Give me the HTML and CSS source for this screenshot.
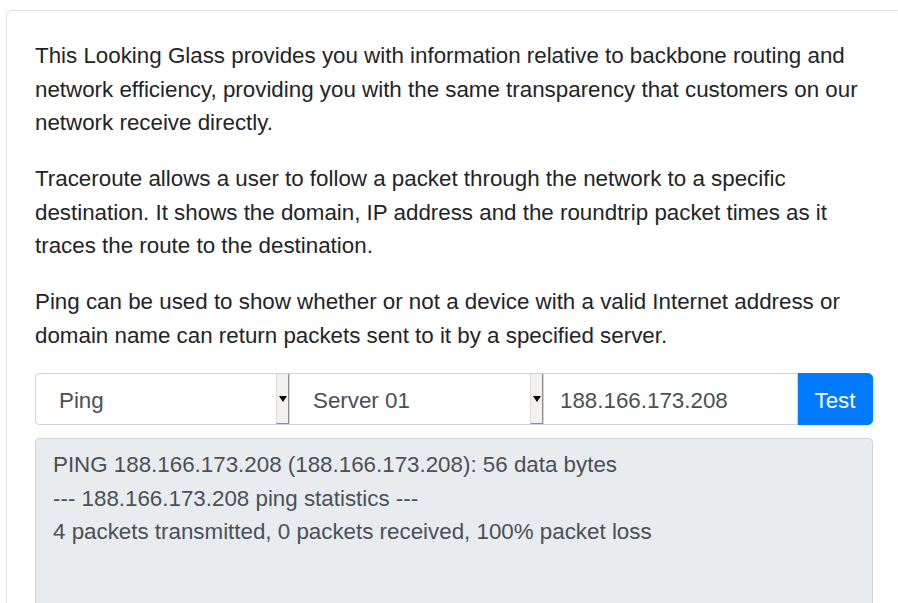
FILE: index.html
```html
<!DOCTYPE html>
<html>
<head>
<meta charset="utf-8">
<link rel="stylesheet" href="styles.css">
</head>
<body>
<div class="page">
  <div class="card">
    <p>This Looking Glass provides you with information relative to backbone routing and network efficiency, providing you with the same transparency that customers on our network receive directly.</p>
    <p>Traceroute allows a user to follow a packet through the network to a specific destination. It shows the domain, IP address and the roundtrip packet times as it traces the route to the destination.</p>
    <p>Ping can be used to show whether or not a device with a valid Internet address or domain name can return packets sent to it by a specified server.</p>
    <div class="input-group">
      <div class="control select first"><span class="value">Ping</span><span class="arrow"></span></div>
      <div class="control select"><span class="value">Server 01</span><span class="arrow"></span></div>
      <div class="control input"><span class="value">188.166.173.208</span></div>
      <button class="btn">Test</button>
    </div>
    <div class="output">PING 188.166.173.208 (188.166.173.208): 56 data bytes
--- 188.166.173.208 ping statistics ---
4 packets transmitted, 0 packets received, 100% packet loss</div>
  </div>
</div>
</body>
</html>
```

FILE: styles.css
```css
html, body {
  margin: 0;
  padding: 0;
  background: #fff;
  overflow: hidden;
}
body {
  font-family: "Liberation Sans", Arial, sans-serif;
  font-size: 22.35px;
  line-height: 33.6px;
  color: #212529;
}
.page {
  padding: 10px 0 0 6px;
  width: 910px;
}
.card {
  width: 838px;
  border: 1px solid rgba(0, 0, 0, 0.125);
  border-radius: 5.6px;
  padding: 28px 28px 0 28px;
  height: 640px;
}
p {
  margin: 0 0 22.4px 0;
}
.input-group {
  display: flex;
  height: 52px;
  margin-top: -2px;
}
.control {
  flex: 1 1 0;
  display: flex;
  align-items: center;
  border: 1px solid #ced4da;
  color: #495057;
  background: #fff;
  margin-left: -1px;
  position: relative;
  min-width: 0;
}
.control .value {
  padding-top: 3px;
}
.control.first {
  margin-left: 0;
  border-radius: 4.2px 0 0 4.2px;
}
.select .value {
  padding-left: 23px;
  flex: 1;
}
.input .value {
  padding-left: 16px;
}
.arrow {
  width: 11px;
  align-self: stretch;
  background: #f2f1f0;
  border-left: 1px solid #dcdcdc;
  border-right: 1px solid #8e8e8e;
  border-bottom: 1px solid #8e8e8e;
  display: flex;
  align-items: center;
  justify-content: center;
}
.arrow::after {
  content: "";
  width: 0;
  height: 0;
  margin-top: 2px;
  border-left: 4px solid transparent;
  border-right: 4px solid transparent;
  border-top: 6px solid #000;
}
.btn {
  flex: 0 0 76px;
  border: 1px solid #007bff;
  background: #007bff;
  color: #fff;
  font-family: "Liberation Sans", Arial, sans-serif;
  font-size: 22.35px;
  border-radius: 0 5px 5px 0;
  margin-left: -1px;
  padding: 5px 0 0 0;
}
.output {
  margin-top: 13px;
  background: #e9ecef;
  border: 1px solid #ced4da;
  border-radius: 4.2px;
  padding: 9px 17px 10px 17px;
  color: #495057;
  white-space: pre-wrap;
  height: 200px;
}
```
